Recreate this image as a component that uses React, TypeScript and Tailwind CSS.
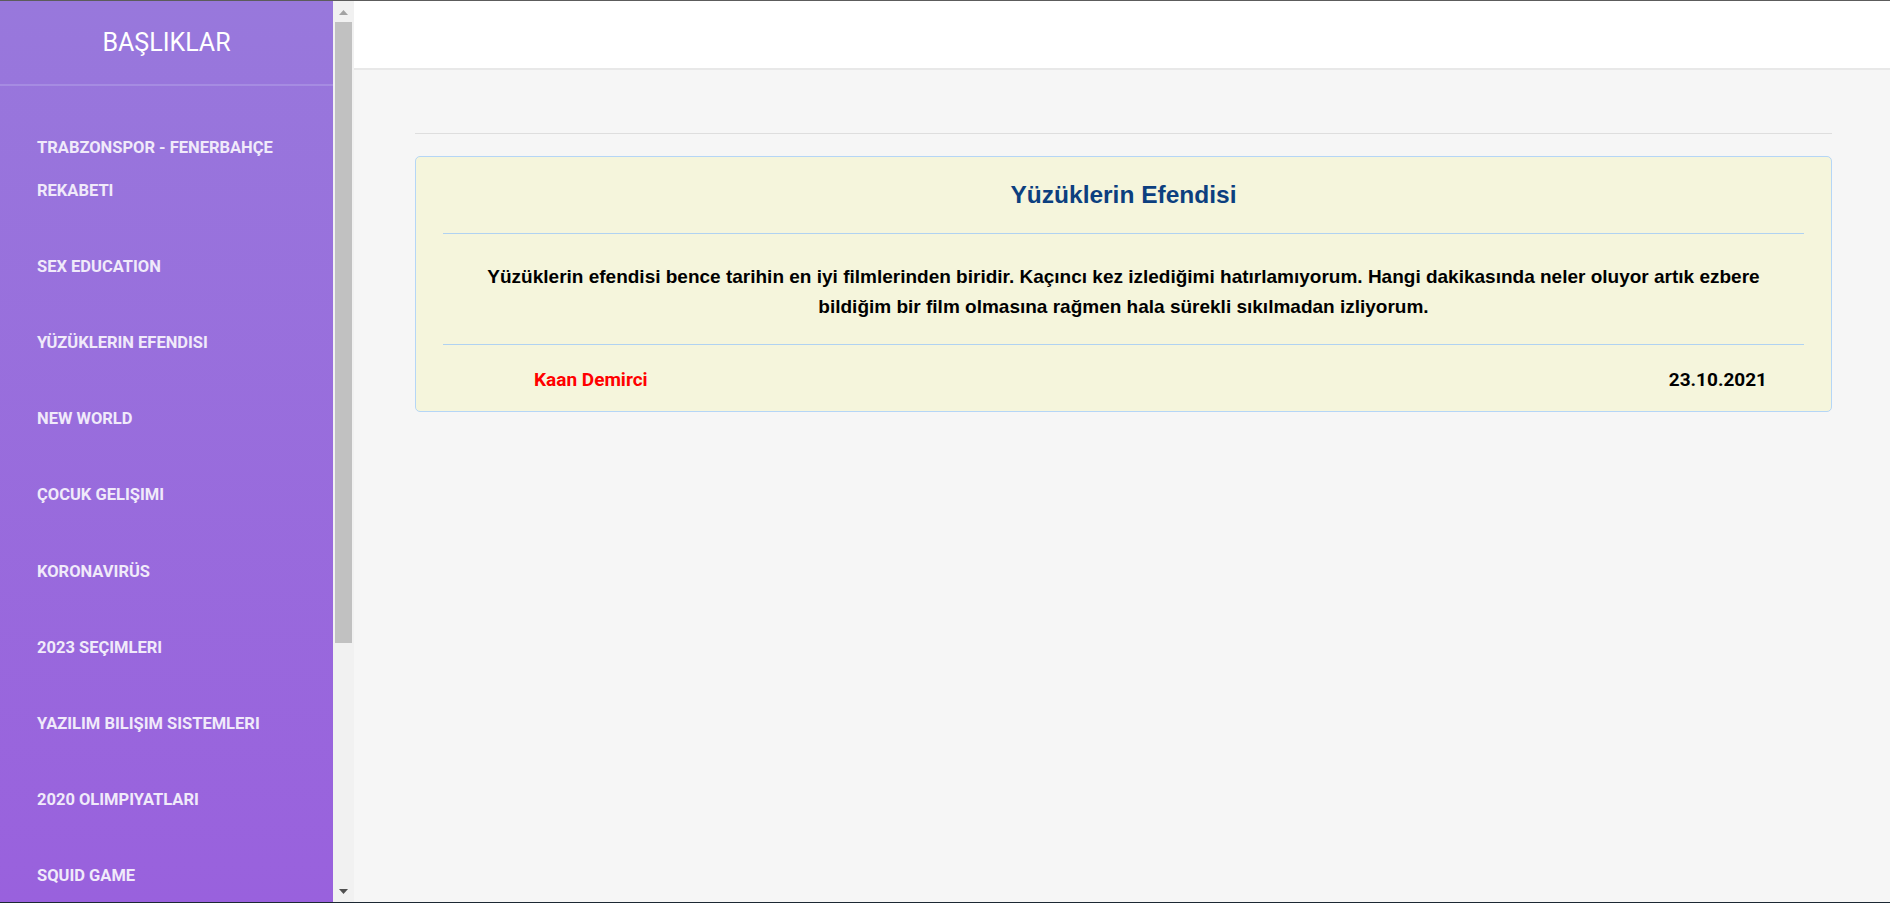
const topics = [
  "TRABZONSPOR - FENERBAHÇE REKABETI",
  "SEX EDUCATION",
  "YÜZÜKLERIN EFENDISI",
  "NEW WORLD",
  "ÇOCUK GELIŞIMI",
  "KORONAVIRÜS",
  "2023 SEÇIMLERI",
  "YAZILIM BILIŞIM SISTEMLERI",
  "2020 OLIMPIYATLARI",
  "SQUID GAME",
];

function FakeScrollbar() {
  return (
    <div className="relative flex w-[21px] shrink-0 flex-col bg-[#f1f1f1]">
      <div className="flex h-[21px] items-start justify-center pt-[9px]">
        <svg width="9" height="6" viewBox="0 0 9 6">
          <path d="M4.5 0 L9 5 L0 5 Z" fill="#a3a3a3" />
        </svg>
      </div>
      <div className="ml-[2px] h-[621px] w-[17px] bg-[#c1c1c1]" />
      <div className="flex-1" />
      <div className="flex h-[21px] items-end justify-center pb-[7px]">
        <svg width="9" height="6" viewBox="0 0 9 6">
          <path d="M0 0 L9 0 L4.5 5 Z" fill="#505050" />
        </svg>
      </div>
    </div>
  );
}

function Sidebar() {
  return (
    <aside className="flex h-full shrink-0">
      <div className="h-full w-[333px] overflow-hidden bg-[linear-gradient(180deg,#9878dc_0%,#9961dd_100%)]">
        <div className="flex h-[83px] items-center justify-center text-[25px] text-white font-['Roboto',sans-serif]">
          BAŞLIKLAR
        </div>
        <div className="h-[2px] bg-[#a68ce2]" />
        <ul className="pt-[23px]">
          {topics.map((t) => (
            <li
              key={t}
              className="py-[16.6px] pl-[37px] pr-[37px] text-[16.5px] font-bold leading-[43px] text-[#f0eafa] font-['Roboto',sans-serif]"
            >
              {t}
            </li>
          ))}
        </ul>
      </div>
      <FakeScrollbar />
    </aside>
  );
}

function EntryCard() {
  return (
    <div className="mt-[22px] rounded-[5px] border border-[#b5d6f6] bg-[#f5f5dc] px-[27px]">
      <div className="flex h-[76px] items-center justify-center text-[24.5px] font-bold text-[#0c3f7f] font-['Liberation_Sans',Arial,sans-serif]">
        Yüzüklerin Efendisi
      </div>
      <div className="h-px bg-[#b0d2f2]" />
      <p className="pt-[28px] pb-[22px] text-center text-[19px] font-bold leading-[30px] text-black font-['Liberation_Sans',Arial,sans-serif]">
        Yüzüklerin efendisi bence tarihin en iyi filmlerinden biridir. Kaçıncı kez izlediğimi hatırlamıyorum. Hangi dakikasında neler oluyor artık ezbere
        <br />
        bildiğim bir film olmasına rağmen hala sürekli sıkılmadan izliyorum.
      </p>
      <div className="h-px bg-[#b0d2f2]" />
      <div className="flex items-center justify-between pt-[23px] pb-[19px] pl-[91px] pr-[37px] text-[19px] font-bold leading-[24px] font-['Roboto',sans-serif]">
        <span className="text-[#ff0000]">Kaan Demirci</span>
        <span className="text-black">23.10.2021</span>
      </div>
    </div>
  );
}

export default function App() {
  return (
    <div className="flex h-[903px] w-full flex-col overflow-hidden bg-[#f6f6f6]">
      <div className="h-px shrink-0 bg-[#5c5c5c]" />
      <div className="flex min-h-0 flex-1">
        <Sidebar />
        <main className="flex min-w-0 flex-1 flex-col">
          <div className="h-[69px] shrink-0 border-b-2 border-[#e8e8e8] bg-white" />
          <div className="pl-[61px] pr-[58px] pt-[63px]">
            <div className="h-px bg-[#dedede]" />
            <EntryCard />
          </div>
        </main>
      </div>
      <div className="h-px shrink-0 bg-[#1c2833]" />
    </div>
  );
}
